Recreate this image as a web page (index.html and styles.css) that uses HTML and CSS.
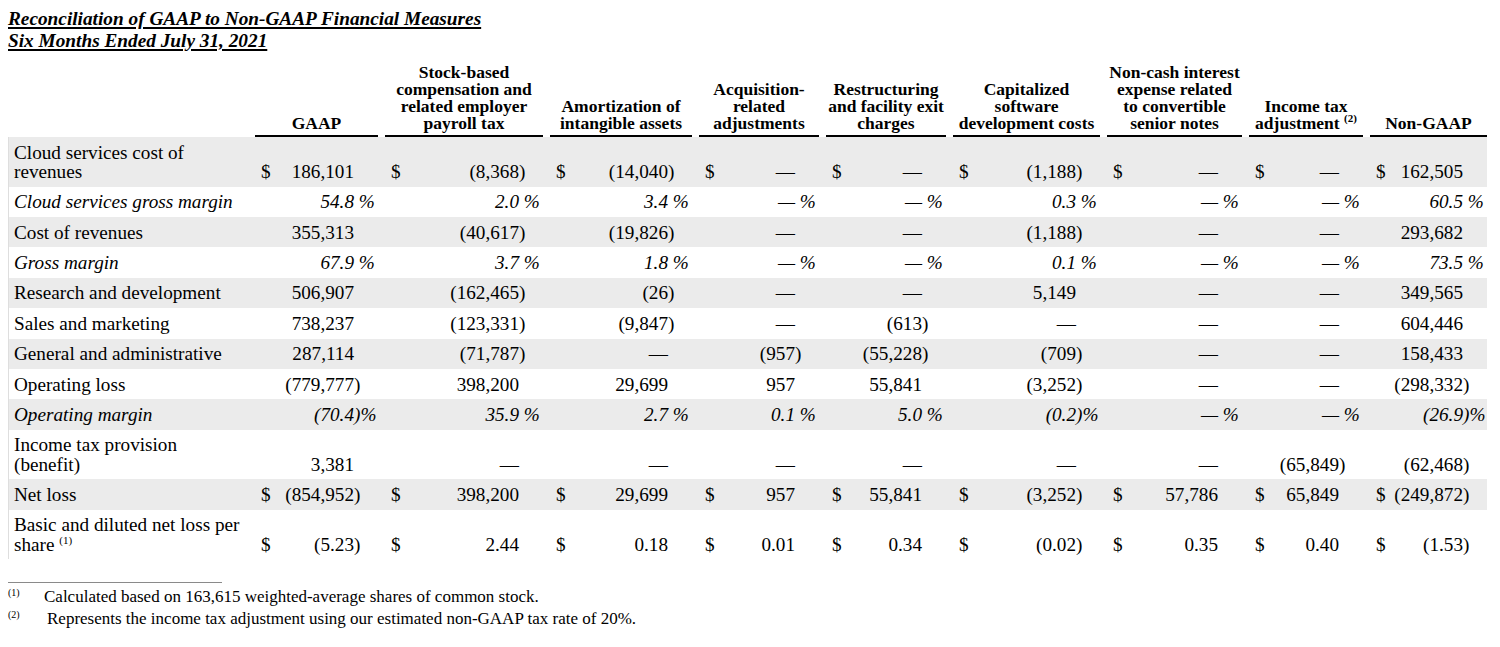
FILE: index.html
```html
<!DOCTYPE html>
<html>
<head>
<meta charset="utf-8">
<title>Reconciliation of GAAP to Non-GAAP Financial Measures</title>
<link rel="stylesheet" href="styles.css">
</head>
<body>
<div class="page">
  <div class="title">
    <div><span class="u">Reconciliation of GAAP to Non-GAAP Financial Measures</span></div>
    <div><span class="u">Six Months Ended July 31, 2021</span></div>
  </div>

  <div class="table">
    <div class="row head">
      <div class="lbl"></div>
      <div class="hc"><div class="h">GAAP</div></div>
      <div class="hc"><div class="h">Stock-based<br>compensation and<br>related employer<br>payroll tax</div></div>
      <div class="hc"><div class="h">Amortization of<br>intangible assets</div></div>
      <div class="hc"><div class="h">Acquisition-<br>related<br>adjustments</div></div>
      <div class="hc"><div class="h">Restructuring<br>and facility exit<br>charges</div></div>
      <div class="hc"><div class="h">Capitalized<br>software<br>development costs</div></div>
      <div class="hc"><div class="h">Non-cash interest<br>expense related<br>to convertible<br>senior notes</div></div>
      <div class="hc"><div class="h">Income tax<br>adjustment <span class="sup">(2)</span></div></div>
      <div class="hc"><div class="h">Non-GAAP</div></div>
    </div>

    <div class="row body gray">
      <div class="lbl">Cloud services cost of<br>revenues</div>
      <div class="cell"><span class="d">$</span><span class="n">186,101</span><span class="s"></span></div>
      <div class="cell"><span class="d">$</span><span class="n">(8,368</span><span class="s">)</span></div>
      <div class="cell"><span class="d">$</span><span class="n">(14,040</span><span class="s">)</span></div>
      <div class="cell"><span class="d">$</span><span class="n">—</span><span class="s"></span></div>
      <div class="cell"><span class="d">$</span><span class="n">—</span><span class="s"></span></div>
      <div class="cell"><span class="d">$</span><span class="n">(1,188</span><span class="s">)</span></div>
      <div class="cell"><span class="d">$</span><span class="n">—</span><span class="s"></span></div>
      <div class="cell"><span class="d">$</span><span class="n">—</span><span class="s"></span></div>
      <div class="cell"><span class="d">$</span><span class="n">162,505</span><span class="s"></span></div>
    </div>

    <div class="row body it">
      <div class="lbl">Cloud services gross margin</div>
      <div class="cell"><span class="d"></span><span class="n">54.8</span><span class="s"> %</span></div>
      <div class="cell"><span class="d"></span><span class="n">2.0</span><span class="s"> %</span></div>
      <div class="cell"><span class="d"></span><span class="n">3.4</span><span class="s"> %</span></div>
      <div class="cell"><span class="d"></span><span class="n">—</span><span class="s"> %</span></div>
      <div class="cell"><span class="d"></span><span class="n">—</span><span class="s"> %</span></div>
      <div class="cell"><span class="d"></span><span class="n">0.3</span><span class="s"> %</span></div>
      <div class="cell"><span class="d"></span><span class="n">—</span><span class="s"> %</span></div>
      <div class="cell"><span class="d"></span><span class="n">—</span><span class="s"> %</span></div>
      <div class="cell"><span class="d"></span><span class="n">60.5</span><span class="s"> %</span></div>
    </div>

    <div class="row body gray">
      <div class="lbl">Cost of revenues</div>
      <div class="cell"><span class="d"></span><span class="n">355,313</span><span class="s"></span></div>
      <div class="cell"><span class="d"></span><span class="n">(40,617</span><span class="s">)</span></div>
      <div class="cell"><span class="d"></span><span class="n">(19,826</span><span class="s">)</span></div>
      <div class="cell"><span class="d"></span><span class="n">—</span><span class="s"></span></div>
      <div class="cell"><span class="d"></span><span class="n">—</span><span class="s"></span></div>
      <div class="cell"><span class="d"></span><span class="n">(1,188</span><span class="s">)</span></div>
      <div class="cell"><span class="d"></span><span class="n">—</span><span class="s"></span></div>
      <div class="cell"><span class="d"></span><span class="n">—</span><span class="s"></span></div>
      <div class="cell"><span class="d"></span><span class="n">293,682</span><span class="s"></span></div>
    </div>

    <div class="row body it">
      <div class="lbl">Gross margin</div>
      <div class="cell"><span class="d"></span><span class="n">67.9</span><span class="s"> %</span></div>
      <div class="cell"><span class="d"></span><span class="n">3.7</span><span class="s"> %</span></div>
      <div class="cell"><span class="d"></span><span class="n">1.8</span><span class="s"> %</span></div>
      <div class="cell"><span class="d"></span><span class="n">—</span><span class="s"> %</span></div>
      <div class="cell"><span class="d"></span><span class="n">—</span><span class="s"> %</span></div>
      <div class="cell"><span class="d"></span><span class="n">0.1</span><span class="s"> %</span></div>
      <div class="cell"><span class="d"></span><span class="n">—</span><span class="s"> %</span></div>
      <div class="cell"><span class="d"></span><span class="n">—</span><span class="s"> %</span></div>
      <div class="cell"><span class="d"></span><span class="n">73.5</span><span class="s"> %</span></div>
    </div>

    <div class="row body gray">
      <div class="lbl">Research and development</div>
      <div class="cell"><span class="d"></span><span class="n">506,907</span><span class="s"></span></div>
      <div class="cell"><span class="d"></span><span class="n">(162,465</span><span class="s">)</span></div>
      <div class="cell"><span class="d"></span><span class="n">(26</span><span class="s">)</span></div>
      <div class="cell"><span class="d"></span><span class="n">—</span><span class="s"></span></div>
      <div class="cell"><span class="d"></span><span class="n">—</span><span class="s"></span></div>
      <div class="cell"><span class="d"></span><span class="n">5,149</span><span class="s"></span></div>
      <div class="cell"><span class="d"></span><span class="n">—</span><span class="s"></span></div>
      <div class="cell"><span class="d"></span><span class="n">—</span><span class="s"></span></div>
      <div class="cell"><span class="d"></span><span class="n">349,565</span><span class="s"></span></div>
    </div>

    <div class="row body">
      <div class="lbl">Sales and marketing</div>
      <div class="cell"><span class="d"></span><span class="n">738,237</span><span class="s"></span></div>
      <div class="cell"><span class="d"></span><span class="n">(123,331</span><span class="s">)</span></div>
      <div class="cell"><span class="d"></span><span class="n">(9,847</span><span class="s">)</span></div>
      <div class="cell"><span class="d"></span><span class="n">—</span><span class="s"></span></div>
      <div class="cell"><span class="d"></span><span class="n">(613</span><span class="s">)</span></div>
      <div class="cell"><span class="d"></span><span class="n">—</span><span class="s"></span></div>
      <div class="cell"><span class="d"></span><span class="n">—</span><span class="s"></span></div>
      <div class="cell"><span class="d"></span><span class="n">—</span><span class="s"></span></div>
      <div class="cell"><span class="d"></span><span class="n">604,446</span><span class="s"></span></div>
    </div>

    <div class="row body gray">
      <div class="lbl">General and administrative</div>
      <div class="cell"><span class="d"></span><span class="n">287,114</span><span class="s"></span></div>
      <div class="cell"><span class="d"></span><span class="n">(71,787</span><span class="s">)</span></div>
      <div class="cell"><span class="d"></span><span class="n">—</span><span class="s"></span></div>
      <div class="cell"><span class="d"></span><span class="n">(957</span><span class="s">)</span></div>
      <div class="cell"><span class="d"></span><span class="n">(55,228</span><span class="s">)</span></div>
      <div class="cell"><span class="d"></span><span class="n">(709</span><span class="s">)</span></div>
      <div class="cell"><span class="d"></span><span class="n">—</span><span class="s"></span></div>
      <div class="cell"><span class="d"></span><span class="n">—</span><span class="s"></span></div>
      <div class="cell"><span class="d"></span><span class="n">158,433</span><span class="s"></span></div>
    </div>

    <div class="row body">
      <div class="lbl">Operating loss</div>
      <div class="cell"><span class="d"></span><span class="n">(779,777</span><span class="s">)</span></div>
      <div class="cell"><span class="d"></span><span class="n">398,200</span><span class="s"></span></div>
      <div class="cell"><span class="d"></span><span class="n">29,699</span><span class="s"></span></div>
      <div class="cell"><span class="d"></span><span class="n">957</span><span class="s"></span></div>
      <div class="cell"><span class="d"></span><span class="n">55,841</span><span class="s"></span></div>
      <div class="cell"><span class="d"></span><span class="n">(3,252</span><span class="s">)</span></div>
      <div class="cell"><span class="d"></span><span class="n">—</span><span class="s"></span></div>
      <div class="cell"><span class="d"></span><span class="n">—</span><span class="s"></span></div>
      <div class="cell"><span class="d"></span><span class="n">(298,332</span><span class="s">)</span></div>
    </div>

    <div class="row body gray it">
      <div class="lbl">Operating margin</div>
      <div class="cell"><span class="d"></span><span class="n">(70.4</span><span class="s">)%</span></div>
      <div class="cell"><span class="d"></span><span class="n">35.9</span><span class="s"> %</span></div>
      <div class="cell"><span class="d"></span><span class="n">2.7</span><span class="s"> %</span></div>
      <div class="cell"><span class="d"></span><span class="n">0.1</span><span class="s"> %</span></div>
      <div class="cell"><span class="d"></span><span class="n">5.0</span><span class="s"> %</span></div>
      <div class="cell"><span class="d"></span><span class="n">(0.2</span><span class="s">)%</span></div>
      <div class="cell"><span class="d"></span><span class="n">—</span><span class="s"> %</span></div>
      <div class="cell"><span class="d"></span><span class="n">—</span><span class="s"> %</span></div>
      <div class="cell"><span class="d"></span><span class="n">(26.9</span><span class="s">)%</span></div>
    </div>

    <div class="row body">
      <div class="lbl">Income tax provision<br>(benefit)</div>
      <div class="cell"><span class="d"></span><span class="n">3,381</span><span class="s"></span></div>
      <div class="cell"><span class="d"></span><span class="n">—</span><span class="s"></span></div>
      <div class="cell"><span class="d"></span><span class="n">—</span><span class="s"></span></div>
      <div class="cell"><span class="d"></span><span class="n">—</span><span class="s"></span></div>
      <div class="cell"><span class="d"></span><span class="n">—</span><span class="s"></span></div>
      <div class="cell"><span class="d"></span><span class="n">—</span><span class="s"></span></div>
      <div class="cell"><span class="d"></span><span class="n">—</span><span class="s"></span></div>
      <div class="cell"><span class="d"></span><span class="n">(65,849</span><span class="s">)</span></div>
      <div class="cell"><span class="d"></span><span class="n">(62,468</span><span class="s">)</span></div>
    </div>

    <div class="row body gray">
      <div class="lbl">Net loss</div>
      <div class="cell"><span class="d">$</span><span class="n">(854,952</span><span class="s">)</span></div>
      <div class="cell"><span class="d">$</span><span class="n">398,200</span><span class="s"></span></div>
      <div class="cell"><span class="d">$</span><span class="n">29,699</span><span class="s"></span></div>
      <div class="cell"><span class="d">$</span><span class="n">957</span><span class="s"></span></div>
      <div class="cell"><span class="d">$</span><span class="n">55,841</span><span class="s"></span></div>
      <div class="cell"><span class="d">$</span><span class="n">(3,252</span><span class="s">)</span></div>
      <div class="cell"><span class="d">$</span><span class="n">57,786</span><span class="s"></span></div>
      <div class="cell"><span class="d">$</span><span class="n">65,849</span><span class="s"></span></div>
      <div class="cell"><span class="d">$</span><span class="n">(249,872</span><span class="s">)</span></div>
    </div>

    <div class="row body">
      <div class="lbl">Basic and diluted net loss per<br>share <span class="sup">(1)</span></div>
      <div class="cell"><span class="d">$</span><span class="n">(5.23</span><span class="s">)</span></div>
      <div class="cell"><span class="d">$</span><span class="n">2.44</span><span class="s"></span></div>
      <div class="cell"><span class="d">$</span><span class="n">0.18</span><span class="s"></span></div>
      <div class="cell"><span class="d">$</span><span class="n">0.01</span><span class="s"></span></div>
      <div class="cell"><span class="d">$</span><span class="n">0.34</span><span class="s"></span></div>
      <div class="cell"><span class="d">$</span><span class="n">(0.02</span><span class="s">)</span></div>
      <div class="cell"><span class="d">$</span><span class="n">0.35</span><span class="s"></span></div>
      <div class="cell"><span class="d">$</span><span class="n">0.40</span><span class="s"></span></div>
      <div class="cell"><span class="d">$</span><span class="n">(1.53</span><span class="s">)</span></div>
    </div>
  </div>

  <div class="fn-rule"></div>
  <div class="fn"><span class="mark">(1)</span><span class="fn-text">Calculated based on 163,615 weighted-average shares of common stock.</span></div>
  <div class="fn fn2"><span class="mark">(2)</span><span class="fn-text">Represents the income tax adjustment using our estimated non-GAAP tax rate of 20%.</span></div>
</div>
</body>
</html>
```

FILE: styles.css
```css
html, body {
  margin: 0;
  padding: 0;
  background: #ffffff;
}

body {
  font-family: "Liberation Serif", "Times New Roman", serif;
  color: #000000;
}

.page {
  padding: 8px 0 0 8px;
  width: 1479px;
}

.title {
  font-size: 19.3px;
  line-height: 22px;
  font-weight: bold;
  font-style: italic;
}

.title .u {
  text-decoration: underline;
  text-decoration-thickness: 1.5px;
  text-underline-offset: 2px;
}

.table {
  margin-top: 12px;
}

.row {
  display: grid;
  grid-template-columns: 240px 130px 165px 149px 127px 127px 154px 142px 121px 124px;
  align-items: end;
  font-size: 19.2px;
  line-height: 19.2px;
  padding: 5.6px 0;
}

.row.body {
  box-shadow: inset 1px 0 0 #dedede;
}

.row.head {
  font-size: 17.5px;
  line-height: 17px;
  font-weight: bold;
  padding: 0;
}

.gray {
  background: #ebebeb;
}

.it {
  font-style: italic;
}

.lbl {
  padding-left: 6px;
  align-self: start;
  white-space: nowrap;
}

.hc {
  padding-left: 7px;
}

.h {
  text-align: center;
  border-bottom: 2px solid #000;
  padding-bottom: 3px;
}

.cell {
  padding-left: 7px;
  display: flex;
  align-items: baseline;
  white-space: nowrap;
}

.d {
  width: 12px;
  padding-left: 6px;
}

.n {
  flex: 1;
  text-align: right;
}

.s {
  width: 24px;
  white-space: pre;
}

.sup {
  font-size: 11px;
  line-height: 0;
  vertical-align: super;
  font-weight: normal;
}

.head .sup {
  font-weight: bold;
}

.fn-rule {
  width: 214px;
  border-top: 1px solid #8a8a8a;
  margin-top: 23px;
  margin-bottom: 3px;
}

.fn {
  display: flex;
  align-items: baseline;
  font-size: 17px;
  line-height: 22px;
}

.mark {
  width: 36px;
  font-size: 10px;
  line-height: 0;
  position: relative;
  top: -6px;
}

.fn2 .mark {
  width: 39px;
}
```
